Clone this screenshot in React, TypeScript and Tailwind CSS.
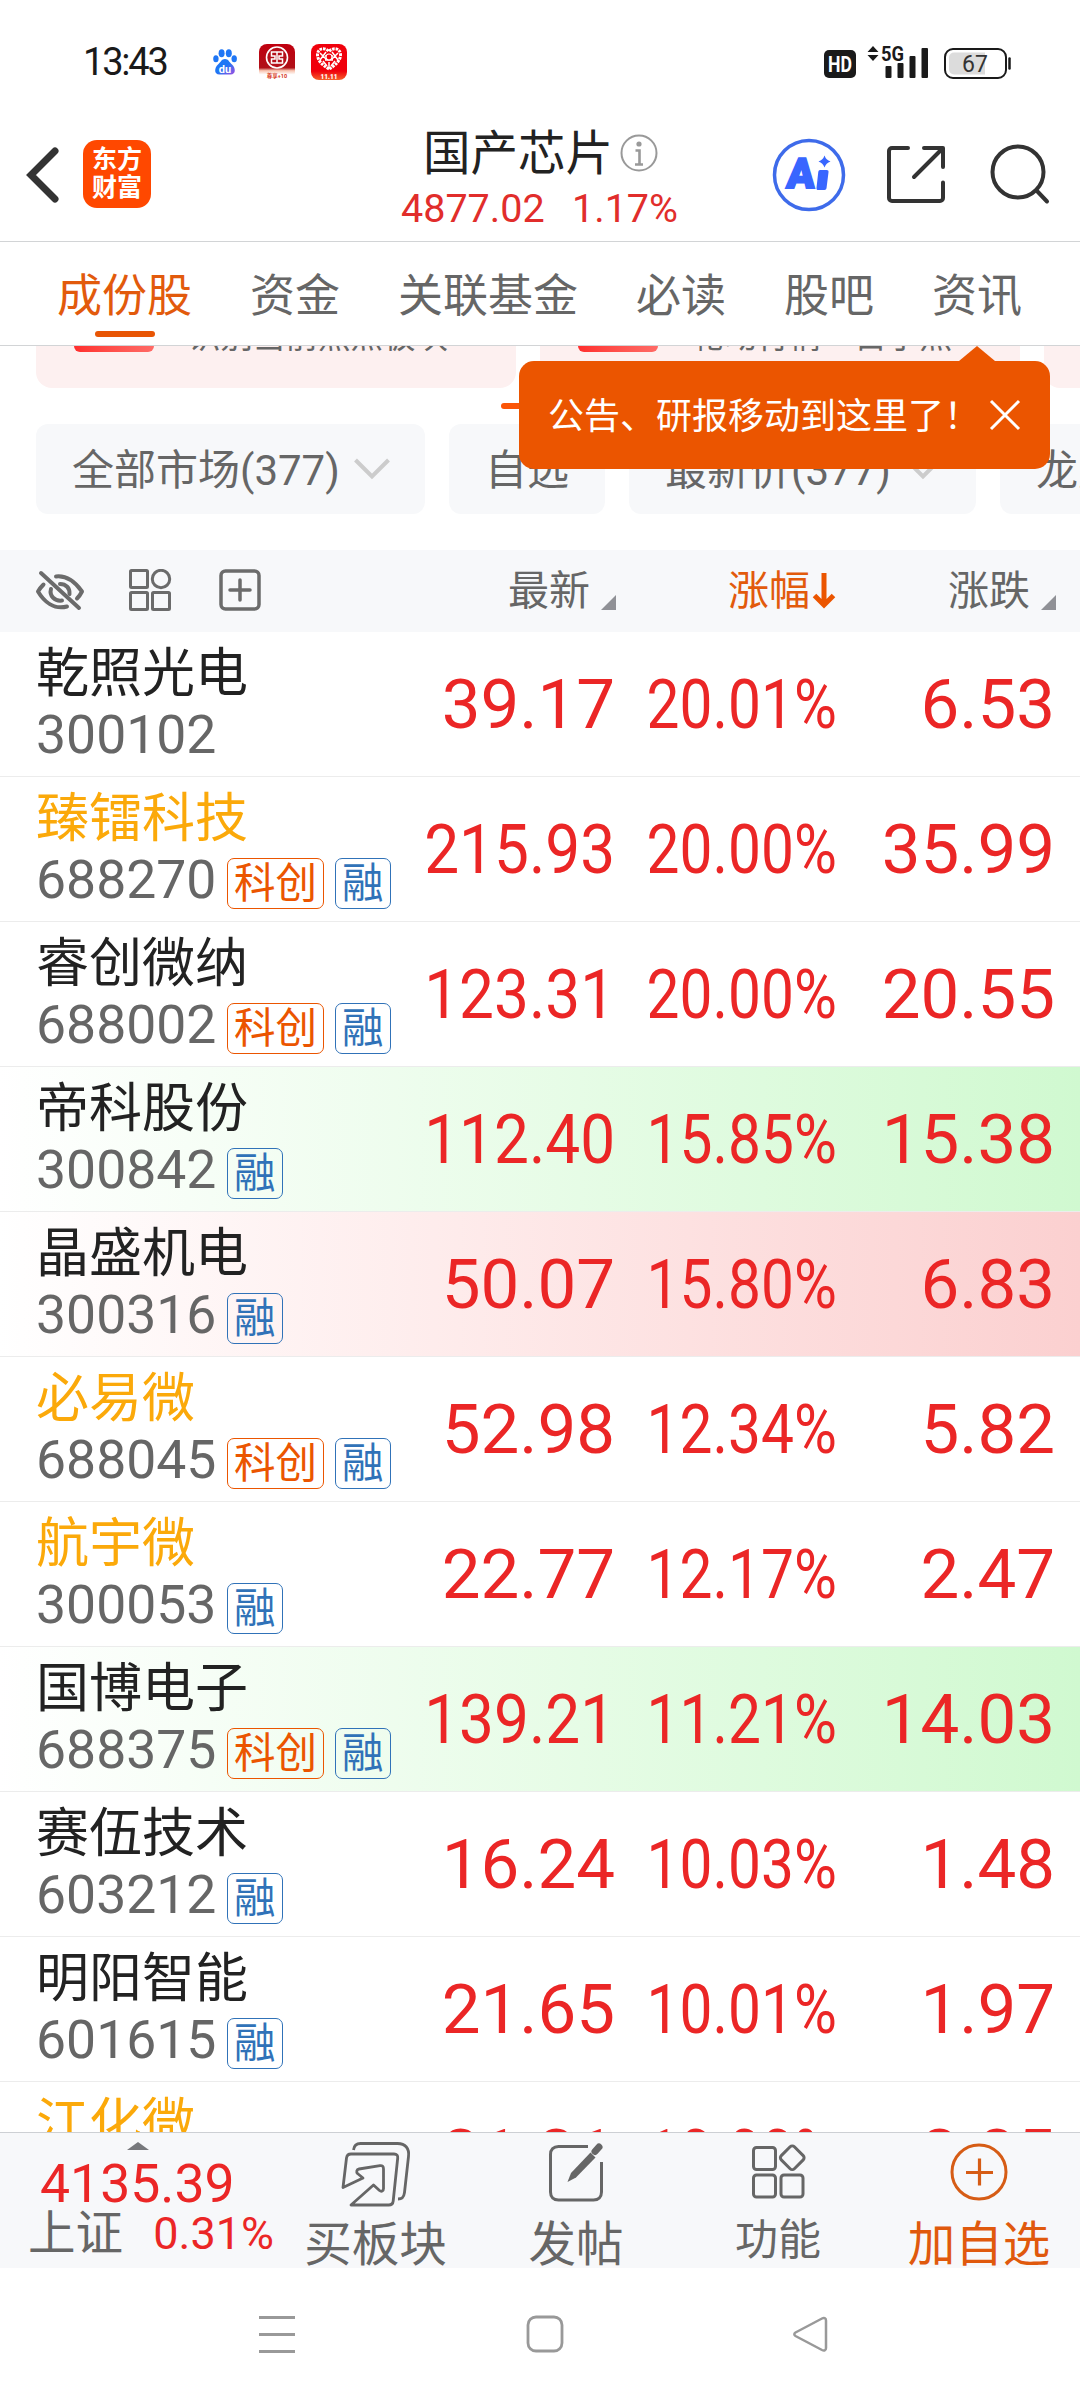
type Tag = "科创" | "融";

interface Stock {
  name: string;
  code: string;
  price: string;
  pct: string;
  diff: string;
  tags?: Tag[];
  held?: boolean;
  flash?: "up" | "down";
}

const stocks: Stock[] = [
  { name: "乾照光电", code: "300102", price: "39.17", pct: "20.01%", diff: "6.53" },
  { name: "臻镭科技", code: "688270", price: "215.93", pct: "20.00%", diff: "35.99", tags: ["科创", "融"], held: true },
  { name: "睿创微纳", code: "688002", price: "123.31", pct: "20.00%", diff: "20.55", tags: ["科创", "融"] },
  { name: "帝科股份", code: "300842", price: "112.40", pct: "15.85%", diff: "15.38", tags: ["融"], flash: "down" },
  { name: "晶盛机电", code: "300316", price: "50.07", pct: "15.80%", diff: "6.83", tags: ["融"], flash: "up" },
  { name: "必易微", code: "688045", price: "52.98", pct: "12.34%", diff: "5.82", tags: ["科创", "融"], held: true },
  { name: "航宇微", code: "300053", price: "22.77", pct: "12.17%", diff: "2.47", tags: ["融"], held: true },
  { name: "国博电子", code: "688375", price: "139.21", pct: "11.21%", diff: "14.03", tags: ["科创", "融"], flash: "down" },
  { name: "赛伍技术", code: "603212", price: "16.24", pct: "10.03%", diff: "1.48", tags: ["融"] },
  { name: "明阳智能", code: "601615", price: "21.65", pct: "10.01%", diff: "1.97", tags: ["融"] },
  { name: "江化微", code: "603078", price: "31.31", pct: "10.00%", diff: "2.85", held: true },
];

const tabs = ["成份股", "资金", "关联基金", "必读", "股吧", "资讯"];

function StatusBar() {
  return (
    <div className="flex h-[124px] items-center pl-[83px] pr-[68px]">
      <span className="w-[130px] text-[38px] leading-none tracking-[-2.2px] text-[#1a1a1a]">13:43</span>
      <svg width="24" height="26" viewBox="0 0 24 26">
        <defs>
          <linearGradient id="paw" x1="0" y1="0" x2="1" y2="1">
            <stop offset="0.5" stopColor="#1f76f5" />
            <stop offset="1" stopColor="#a04ee0" />
          </linearGradient>
        </defs>
        <g fill="#1f76f5">
          <ellipse cx="8.6" cy="4.2" rx="3" ry="4" />
          <ellipse cx="15.8" cy="4.2" rx="3" ry="4" />
          <ellipse cx="2.9" cy="9.8" rx="2.7" ry="3.5" />
          <ellipse cx="21.2" cy="9.8" rx="2.7" ry="3.5" />
        </g>
        <path d="M12 10c3.500 0 4 3 7 5.500 3.500 3 4.500 10-1.500 10h-11c-6 0-5-7-1.500-10 3-2.500 3.500-5.500 7-5.500z" fill="url(#paw)" />
        <text x="12" y="23.500" fontSize="11" fontWeight="700" textAnchor="middle" fill="#fff">du</text>
      </svg>
      <svg className="ml-[22px]" width="36" height="36" viewBox="0 0 36 36">
        <defs>
          <linearGradient id="bank" x1="0" y1="0" x2="0" y2="1">
            <stop offset="0" stopColor="#c0000f" />
            <stop offset="0.66" stopColor="#b01018" />
            <stop offset="0.74" stopColor="#f8c4b0" />
            <stop offset="0.85" stopColor="#fff" />
          </linearGradient>
        </defs>
        <rect width="36" height="36" rx="8" fill="url(#bank)" />
        <circle cx="18" cy="13.500" r="10.500" fill="#b5101a" stroke="#fff" strokeWidth="1.600" />
        <path d="M12.500 8h11v4h-3.500v3h3.500v4h-11v-4h3.500v-3h-3.500zM18 8v11" fill="none" stroke="#fff" strokeWidth="1.500" />
        <text x="18" y="34" fontSize="5.500" fontWeight="700" textAnchor="middle" fill="#d83a1c">尊享+10</text>
      </svg>
      <svg className="ml-4" width="36" height="36" viewBox="0 0 36 36">
        <defs>
          <linearGradient id="sale" x1="0" y1="0" x2="0" y2="1">
            <stop offset="0.75" stopColor="#f0000c" />
            <stop offset="1" stopColor="#f5602a" />
          </linearGradient>
        </defs>
        <rect width="36" height="36" rx="8" fill="url(#sale)" />
        <path d="M18 25C11 21 6.500 16 6.500 11c0-7 7.500-8 11.500-3.500 4-4.500 11.500-3.500 11.500 3.500 0 5-4.500 10-11.500 14z" fill="none" stroke="#fff" strokeWidth="3" strokeDasharray="2.600 .9" />
        <path d="M9 9l6 6M15 8l-6 8M27 9l-6 6M21 8l6 8M12 17l4 5M24 17l-4 5M18 18v6M14 12h8M14 16h8" stroke="#fff" strokeWidth="1.500" />
        <circle cx="18" cy="13" r="3" fill="#f0000c" stroke="#fff" strokeWidth="1.200" />
        <text x="18" y="34.500" fontSize="8" fontWeight="900" textAnchor="middle" textLength="17" lengthAdjust="spacingAndGlyphs" fill="#fff">11.11</text>
      </svg>
      <svg className="ml-auto" width="188" height="34" viewBox="0 0 188 34">
        <rect x="0" y="5" width="32" height="28" rx="5" fill="#1a1a1a" />
        <text x="16" y="26.500" fontSize="22" fontWeight="700" textAnchor="middle" textLength="24" lengthAdjust="spacingAndGlyphs" fill="#fff">HD</text>
        <path d="M49 1l5.500 6h-11zM49 16l5.500-6h-11z" fill="#1a1a1a" />
        <text x="57" y="15.500" fontSize="20" fontWeight="700" textLength="23" lengthAdjust="spacingAndGlyphs" fill="#1a1a1a">5G</text>
        <g fill="#1a1a1a">
          <rect x="61.500" y="21" width="6" height="12" rx="1" />
          <rect x="73.500" y="18" width="6" height="15" rx="1" />
          <rect x="85.500" y="11" width="6" height="22" rx="1" />
          <rect x="97.500" y="3" width="6.500" height="30" rx="1" />
        </g>
        <rect x="121" y="4" width="61" height="29" rx="8" fill="none" stroke="#1a1a1a" strokeWidth="2" />
        <path d="M161 7.500v22h-31a5 5 0 0 1-5-5v-12a5 5 0 0 1 5-5z" fill="#dcdcdc" />
        <text x="151" y="26.500" fontSize="23" textAnchor="middle" fill="#333">67</text>
        <path d="M185.500 13.500v10" stroke="#1a1a1a" strokeWidth="2.500" strokeLinecap="round" />
      </svg>
    </div>
  );
}

function TitleBar() {
  return (
    <div className="flex h-[118px] border-b border-[#d2d4d6] pl-[26px]">
      <svg className="mt-[22px]" width="34" height="58" viewBox="0 0 34 58">
        <path d="M29 5L5 29l24 24" fill="none" stroke="#333" strokeWidth="7" strokeLinecap="round" />
      </svg>
      <div className="ml-[23px] mt-4 flex h-[68px] w-[68px] flex-col items-center justify-center rounded-[14px] bg-[#ff4800] text-[25px] font-bold leading-[28px] text-white">
        <span>东方</span>
        <span>财富</span>
      </div>
      <div className="ml-[250px] w-[277px] text-[#e12d2b]">
        <div className="flex pl-[22px]">
          <span className="text-[47.5px] leading-[60px] text-[#222]">国产芯片</span>
          <svg className="ml-[7px] mt-[10px]" width="38" height="38" viewBox="0 0 38 38" fill="none" stroke="#999">
            <circle cx="19" cy="19" r="17.500" strokeWidth="2" />
            <circle cx="19" cy="10" r="2.600" fill="#999" stroke="none" />
            <path d="M15.500 16.500H19.500V30M15 30.500h8" strokeWidth="2.600" />
          </svg>
        </div>
        <div className="flex justify-between text-[39.5px] leading-[50px]">
          <span>4877.02</span>
          <span>1.17%</span>
        </div>
      </div>
      <svg className="ml-[94px] mt-[14px]" width="74" height="74" viewBox="0 0 74 74" fill="#3866ff">
        <circle cx="37" cy="37" r="34.500" fill="none" stroke="#3e6bea" strokeWidth="3.500" />
        <text x="14" y="50.500" fontSize="42" fontWeight="900" stroke="#3866ff" strokeWidth="2" textLength="28" lengthAdjust="spacingAndGlyphs" transform="skewX(-4) translate(3.500 0)">A</text>
        <path d="M48 32h6.500a2 2 0 0 1 2 2.300l-2 16a2 2 0 0 1-2 1.700h-6a2 2 0 0 1-2-2.300l1.800-16a2 2 0 0 1 1.700-1.700z" />
        <path d="M52.500 17.500q1.500 4.500 6 6-4.500 1.500-6 6-1.500-4.500-6-6 4.500-1.500 6-6z" />
      </svg>
      <svg className="ml-[40px] mt-[21px]" width="60" height="60" viewBox="0 0 60 60" fill="none" stroke="#333" strokeWidth="4" strokeLinecap="round" strokeLinejoin="round">
        <path d="M22 3H6a3 3 0 0 0-3 3v47a3 3 0 0 0 3 3h48a3 3 0 0 0 3-3V37.500" />
        <path d="M38 3h19v19M56 4L28 32" />
      </svg>
      <svg className="ml-[44px] mt-5" width="62" height="62" viewBox="0 0 62 62" fill="none" stroke="#333" strokeWidth="4" strokeLinecap="round">
        <circle cx="28" cy="28" r="25.500" />
        <path d="M47.500 47.500L57 57.500" />
      </svg>
    </div>
  );
}

function Tabs() {
  return (
    <div className="flex h-[104px] gap-[58px] border-b border-[#d2d4d6] pl-[57px] text-[45px] text-[#666]">
      {tabs.map((t, i) => (
        <div key={t} className={i === 0 ? "flex flex-col items-center text-[#e25a0c]" : ""}>
          <div className="h-[89px] leading-[110px]">{t}</div>
          {i === 0 && <div className="h-[6px] w-[60px] rounded-full bg-[#e85504]" />}
        </div>
      ))}
    </div>
  );
}

function PromoCard(props: { text: string }) {
  return (
    <div className="flex h-[42px] w-[480px] shrink-0 rounded-b-[16px] bg-[#fdf0f0] pl-[38px]">
      <div className="h-[6px] w-[80px] rounded-b-[12px] bg-linear-to-r from-[#ff2d2d] to-[#ff6a66]" />
      <div className="ml-[34px] flex h-[10px] flex-col justify-end overflow-hidden text-[32.5px] leading-[40px] text-[#666]">
        <span className="-mb-[1px] whitespace-nowrap">{props.text}</span>
      </div>
    </div>
  );
}

function Chip(props: { label: string; width: string; arrow?: boolean }) {
  return (
    <div className={`flex h-[90px] shrink-0 items-center rounded-[12px] bg-[#f7f8fa] pl-[36px] text-[42px] leading-none text-[#666] ${props.width}`}>
      <span className="whitespace-nowrap pt-[4px]">{props.label}</span>
      {props.arrow && (
        <svg className="ml-[13px]" width="38" height="24" viewBox="0 0 38 24">
          <path d="M2.500 3L19 19.500 35.500 3" fill="none" stroke="#ccc" strokeWidth="4" />
        </svg>
      )}
    </div>
  );
}

function Filters() {
  return (
    <div className="h-[204px] overflow-hidden">
      <div className="flex gap-6 pl-[36px]">
        <PromoCard text="识别当前热点板块" />
        <PromoCard text="轮动行情一目了然" />
        <PromoCard text="" />
      </div>
      <div className="mx-auto mt-[15px] h-[6px] w-[78px] rounded-full bg-[#fb5507]" />
      <div className="mt-[15px] flex gap-6 pl-[36px]">
        <Chip label="全部市场(377)" width="w-[389px]" arrow />
        <Chip label="自选" width="w-[156px]" />
        <Chip label="最新价(377)" width="w-[347px]" arrow />
        <Chip label="龙虎榜" width="w-[240px]" />
      </div>
    </div>
  );
}

function Tooltip() {
  return (
    <div className="absolute left-[519px] top-[346px] w-[531px]">
      <svg className="ml-[440px] block" width="36" height="15" viewBox="0 0 36 15">
        <path d="M0 15L18 0l18 15z" fill="#eb5500" />
      </svg>
      <div className="flex h-[108px] items-center rounded-[15px] bg-[#eb5500] pl-[29px] text-[36px] leading-none text-white">
        <span className="w-[440px] whitespace-nowrap pt-[4px]">公告、研报移动到这里了！</span>
        <svg width="34" height="34" viewBox="0 0 34 34">
          <path d="M3 3l28 28M31 3L3 31" stroke="#fff" strokeWidth="3" />
        </svg>
      </div>
    </div>
  );
}

function Corner() {
  return (
    <svg className="mt-[22px]" width="15" height="15" viewBox="0 0 15 15">
      <path d="M15 0v15H0z" fill="#909196" />
    </svg>
  );
}

function TableHead() {
  return (
    <div className="flex h-[82px] items-center bg-[#f7f8fa] text-[41px] leading-none text-[#666]">
      <div className="flex w-[400px] items-center pl-[35px]">
        <svg width="50" height="42" viewBox="0 0 50 42" fill="none" stroke="#6b6b6b" strokeWidth="4" strokeLinecap="round" strokeLinejoin="round">
          <path d="M6 3l38 35" />
          <path d="M21 6.500c13-1.500 21 8 26 15-1.500 3-3 5-5 7" />
          <path d="M8.500 14.500C6 17 4.500 19 3 21.500 9 31.500 19 40 32 36.500" />
          <path d="M25 14c6 0 10 4 9.500 10M16 19c-2 7 4 12.500 11 11.500" />
        </svg>
        <svg className="ml-[43px]" width="44" height="44" viewBox="0 0 44 44" fill="none" stroke="#6b6b6b" strokeWidth="3">
          <rect x="2.500" y="1.500" width="17" height="17" rx="1" />
          <circle cx="33" cy="10" r="8.700" />
          <rect x="2.500" y="23.500" width="17" height="17" rx="1" />
          <rect x="24.500" y="23.500" width="17" height="17" rx="1" />
        </svg>
        <svg className="ml-[46px]" width="44" height="44" viewBox="0 0 44 44" fill="none" stroke="#6b6b6b" strokeWidth="3.500">
          <rect x="3" y="2" width="38" height="38" rx="4.500" />
          <path d="M22 11v20M12 21h20" strokeLinecap="round" />
        </svg>
      </div>
      <div className="flex w-[216px] items-center justify-end gap-[11px]">
        最新
        <Corner />
      </div>
      <div className="flex w-[220px] items-center justify-end gap-[2px] text-[#e25a0c]">
        涨幅
        <svg width="24" height="38" viewBox="0 0 24 38">
          <path d="M12 1v31M2.500 23.500l9.500 9.500 9.500-9.500" fill="none" stroke="#eb5500" strokeWidth="5" />
        </svg>
      </div>
      <div className="flex w-[220px] items-center justify-end gap-[11px]">
        涨跌
        <Corner />
      </div>
    </div>
  );
}

function Badge(props: { tag: Tag }) {
  return (
    <span
      className={`flex h-[51px] items-center rounded-[7px] border px-[6px] text-[41.5px] leading-none ${
        props.tag === "融" ? "border-[#3072b8] text-[#3072b8]" : "border-[#eb5500] text-[#eb5500]"
      }`}
    >
      {props.tag}
    </span>
  );
}

function StockRow(props: { stock: Stock }) {
  const s = props.stock;
  const flash =
    s.flash === "up"
      ? "bg-linear-to-r from-white to-[#fbd0d0]"
      : s.flash === "down"
        ? "bg-linear-to-r from-white to-[#d0f9d0]"
        : "";
  return (
    <div className={`flex h-[145px] shrink-0 border-b border-[#ececec] text-[69px] leading-[145px] text-[#eb2626] ${flash}`}>
      <div className="w-[400px] pl-[36px] pt-[12px] leading-[60px]">
        <div className={`text-[53px] ${s.held ? "text-[#fba90a]" : "text-[#222]"}`}>{s.name}</div>
        <div className="mt-px flex h-[60px] text-[53.5px] text-[#666]">
          <span className="w-[191px]">{s.code}</span>
          <div className="mt-[8px] flex gap-[11px]">
            {s.tags?.map((t) => <Badge key={t} tag={t} />)}
          </div>
        </div>
      </div>
      <div className="flex w-[215px] justify-end">
        <span className={s.price.length > 5 ? "origin-right scale-x-[0.9]" : ""}>{s.price}</span>
      </div>
      <div className="flex w-[222px] justify-end">
        <span className="origin-right scale-x-[0.85]">{s.pct}</span>
      </div>
      <div className="flex w-[218px] justify-end">{s.diff}</div>
    </div>
  );
}

function BottomBar() {
  return (
    <div className="flex h-[136px] border-t border-[#cdd0d4] bg-[#f7f8fa] text-[47.5px] leading-[56px] text-[#666]">
      <div className="w-[290px] pl-[28px] pt-[9px]">
        <svg className="ml-[99px] block" width="22" height="8" viewBox="0 0 22 8">
          <path d="M0 8L11 0l11 8z" fill="#77787c" />
        </svg>
        <div className="mt-[10px] pl-[12px] text-[53.5px] leading-[48px] text-[#eb2626]">4135.39</div>
        <div className="mt-px flex h-[50px] items-center justify-between pr-[16px] leading-[50px]">
          <span>上证</span>
          <span className="text-[45px] text-[#eb2626]">0.31%</span>
        </div>
      </div>
      <div className="flex w-[171px] flex-col items-center pt-[7px]">
        <svg width="72" height="68" viewBox="0 0 72 68" fill="none" stroke="#666" strokeWidth="2.800" strokeLinejoin="round">
          <path d="M13.500 10c.6-5 3-6.500 7-6.500h37c8 0 12 5 11 13l-4 36c-.6 4.500-2 6.500-6.500 6.500" />
          <path d="M3 47.500L6.500 18c.4-3 1.500-4 4.500-4h43c3 0 4 1.500 3.700 4l-4.500 43c-.3 3-1.500 4-4.500 4H11l22.500-20 6 5.500c2 1.500 4 .5 4-2V29c0-2.500-1-3.500-3.500-3.300L19 29c-2.500.4-2.800 3-1.500 4.500L23 38z" />
        </svg>
        <span className="mt-[4px] h-[56px] leading-[66px]">买板块</span>
      </div>
      <div className="ml-[27px] flex w-[176px] flex-col items-center pt-[7px]">
        <svg width="60" height="68" viewBox="0 0 60 68" fill="none" stroke="#666" strokeWidth="3">
          <path d="M42 6.500H12.500c-5 0-8 3-8 8V52c0 5 3 8 8 8h35c5 0 8-3 8-8V22" />
          <path d="M49 11.500l4-4.500" strokeWidth="7" strokeLinecap="round" />
          <path d="M44.500 12.500l5 5-19.500 20-8.500 4.500 3.500-9z" fill="#666" stroke="none" />
        </svg>
        <span className="mt-[4px] h-[56px] leading-[66px]">发帖</span>
      </div>
      <div className="ml-[24px] flex w-[180px] flex-col items-center pt-[7px]">
        <svg width="56" height="68" viewBox="0 0 56 68" fill="none" stroke="#666" strokeWidth="3">
          <rect x="3.500" y="7.500" width="22" height="22" rx="3" />
          <rect x="3.500" y="35" width="22" height="22" rx="3" />
          <rect x="31" y="35" width="22" height="22" rx="3" />
          <rect x="33" y="8.500" width="18.500" height="18.500" rx="3" transform="rotate(45 42.250 17.750)" />
        </svg>
        <span className="mt-[4px] text-[43px]">功能</span>
      </div>
      <div className="ml-[23px] flex w-[176px] flex-col items-center pt-[7px] text-[#e0590d]">
        <svg width="60" height="68" viewBox="0 0 60 68" fill="none" stroke="#d65c15" strokeWidth="3">
          <circle cx="30" cy="32" r="27" />
          <path d="M30.500 18.500v27M17 32.500h27" strokeWidth="3.200" />
        </svg>
        <span className="mt-[4px] h-[56px] leading-[66px]">加自选</span>
      </div>
    </div>
  );
}

function NavBar() {
  return (
    <div className="flex h-[132px] items-center justify-between pl-[257px] pr-[250px]">
      <svg width="40" height="40" viewBox="0 0 40 40">
        <path d="M2 3.500h36M2 20.500h36M2 37.500h36" stroke="#999" strokeWidth="3" />
      </svg>
      <svg width="40" height="40" viewBox="0 0 40 40">
        <rect x="3" y="3" width="34" height="34" rx="8" fill="none" stroke="#999" strokeWidth="2.800" />
      </svg>
      <svg width="38" height="40" viewBox="0 0 38 40">
        <path d="M3.500 18.500L30 4.500c2-1 4-.5 4 2V34c0 2.500-2 3-4 2L3.500 22c-1.600-1-1.600-2.500 0-3.500z" fill="none" stroke="#999" strokeWidth="2.500" />
      </svg>
    </div>
  );
}

export default function App() {
  return (
    <div lang="zh-CN" className="relative flex h-[2400px] w-[1080px] flex-col overflow-hidden bg-white font-[Roboto,'Noto_Sans_CJK_SC',sans-serif]">
      <StatusBar />
      <TitleBar />
      <Tabs />
      <Filters />
      <TableHead />
      <div className="flex h-[1500px] flex-col overflow-hidden">
        {stocks.map((s) => (
          <StockRow key={s.code} stock={s} />
        ))}
      </div>
      <BottomBar />
      <NavBar />
      <Tooltip />
    </div>
  );
}
